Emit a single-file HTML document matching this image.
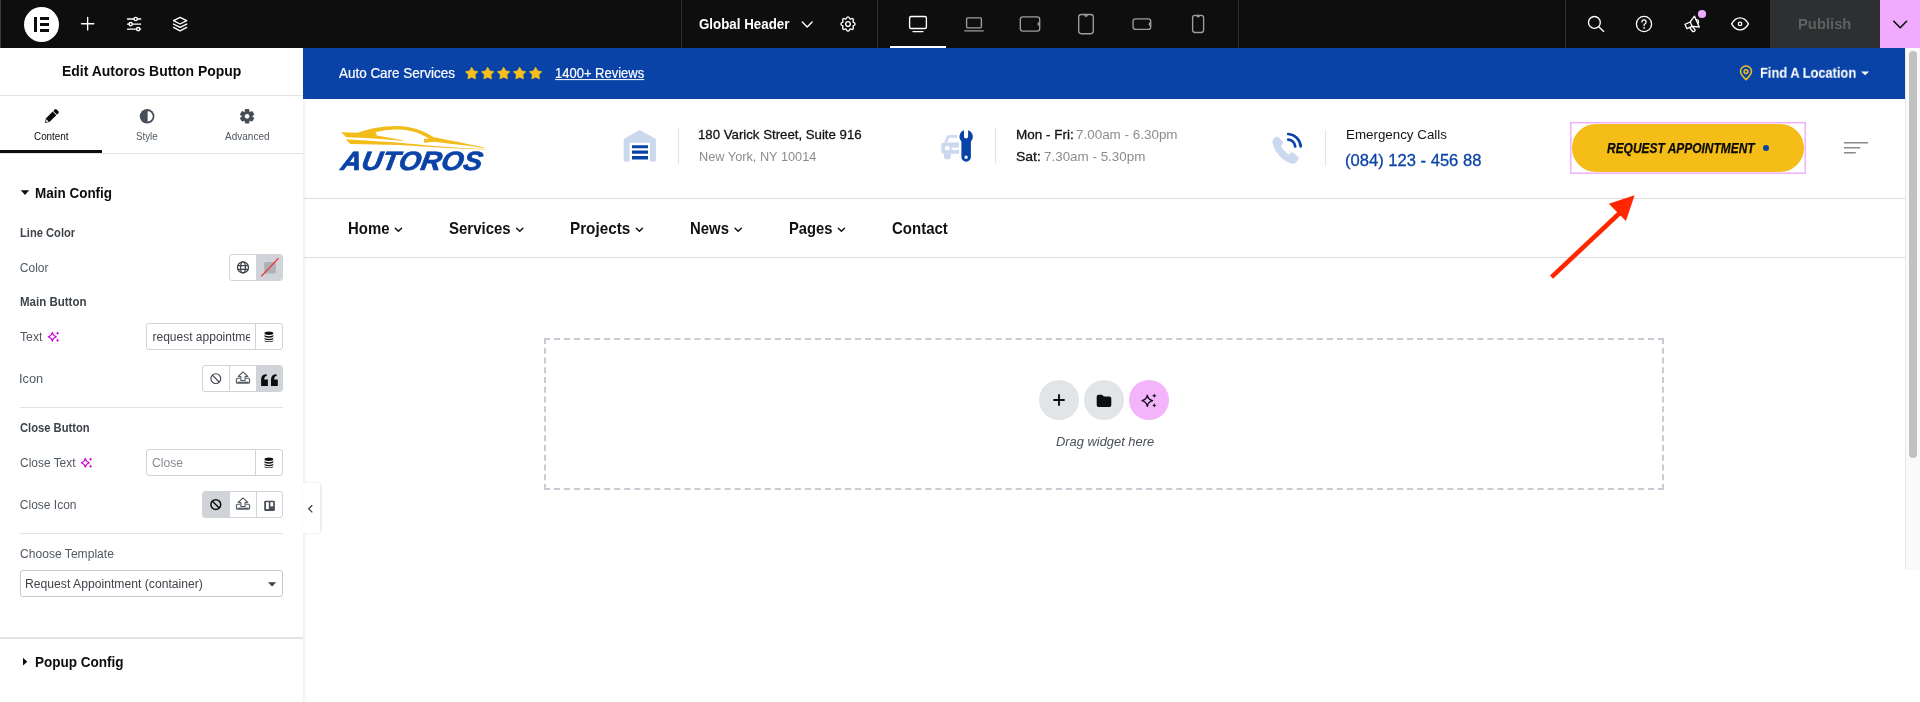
<!DOCTYPE html>
<html lang="en">
<head>
<meta charset="utf-8">
<title>Elementor | Global Header</title>
<style>
*{box-sizing:border-box;margin:0;padding:0}
html,body{width:1920px;height:702px;overflow:hidden;background:#fff;font-family:"Liberation Sans",sans-serif;color:#0c0d0e}
.abs{position:absolute}
svg.abs{overflow:visible;pointer-events:none}
.t{position:absolute;white-space:nowrap;line-height:1;transform-origin:0 50%}
.vsep{position:absolute;top:0;width:1px;height:48px;background:#2f3031}
.hr{position:absolute;left:20px;width:263px;height:1px;background:#e0e3e6}
.box{position:absolute;border:1px solid #d0d4d9;border-radius:3px;background:#fff}
.cell{position:absolute;top:0;height:100%}
</style>
</head>
<body>
<div id="app" style="position:absolute;left:0;top:0;width:1920px;height:702px;will-change:transform">
<!-- ===== TOP BAR ===== -->
<div class="abs" id="topbar" style="left:0;top:0;width:1920px;height:48px;background:#0e0e0f">
  <div class="abs" style="left:0;top:0;width:1px;height:48px;background:#3c3d3e"></div>
  <div class="abs" style="left:24px;top:6.500px;width:35px;height:35px;border-radius:50%;background:#fff"></div>
  <div class="abs" style="left:33.800px;top:17.100px;width:2.900px;height:14.600px;background:#0c0d0e"></div>
  <div class="abs" style="left:39.800px;top:17.100px;width:9.100px;height:2.800px;background:#0c0d0e"></div>
  <div class="abs" style="left:39.800px;top:23.100px;width:9.100px;height:2.800px;background:#0c0d0e"></div>
  <div class="abs" style="left:39.800px;top:28.900px;width:9.100px;height:2.800px;background:#0c0d0e"></div>
  <div class="vsep" style="left:681px"></div>
  <div class="vsep" style="left:877px"></div>
  <div class="vsep" style="left:1238px"></div>
  <div class="vsep" style="left:1565px"></div>
  <div class="abs" style="left:890px;top:46px;width:56px;height:2px;background:#fff"></div>
  <div class="abs" style="left:1770px;top:0;width:110px;height:48px;background:#2e2f30"></div>
  <div class="abs" style="left:1880px;top:0;width:40px;height:48px;background:#f0abfc"></div>
  <span class="t" style="left:699.26px;top:16px;font-size:15px;color:#fff;transform:translateY(0.20px) scaleX(0.8891);font-weight:bold;">Global Header</span><span class="t" style="left:1797.51px;top:16px;font-size:15px;color:#5f6061;transform:translateY(0.00px) scaleX(0.9856);font-weight:bold;">Publish</span>
  <svg class="abs" style="left:0;top:0" width="1920" height="48" viewBox="0 0 1920 48" fill="none" stroke="#fff" stroke-width="1.35" stroke-linecap="round" stroke-linejoin="round">
  <!-- plus -->
  <path d="M81.500 23.700h12.300M87.650 17.500v12.400"/>
  <!-- sliders -->
  <path d="M127.500 19h6.500M137.400 19h3.300M127.500 24.100h1.400M132.400 24.100h8.300M127.500 29.100h8.900M139.900 29.100h.8"/>
  <circle cx="135.650" cy="19" r="1.650"/><circle cx="130.650" cy="24.100" r="1.650"/><circle cx="138.150" cy="29.100" r="1.650"/>
  <!-- layers -->
  <path d="M180.100 17.300l6.600 3.350-6.600 3.350-6.600-3.350z"/><path d="M173.500 24.050l6.600 3.350 6.600-3.350"/><path d="M173.500 27.450l6.600 3.350 6.600-3.350"/>
  <!-- chevron -->
  <path d="M802.3 22l4.9 4.9 4.9-4.9" stroke-width="1.4"/>
  <!-- gear -->
  <g transform="translate(848 24) scale(.79)">
   <path stroke-width="1.7" d="M-1.68-7.68c.43-1.76 2.93-1.76 3.36 0a1.72 1.72 0 0 0 2.57 1.07c1.54-.94 3.31.83 2.37 2.37a1.72 1.72 0 0 0 1.07 2.57c1.75.43 1.75 2.93 0 3.35a1.72 1.72 0 0 0-1.07 2.57c.94 1.54-.83 3.31-2.37 2.37a1.72 1.72 0 0 0-2.57 1.07c-.43 1.75-2.93 1.75-3.35 0a1.72 1.72 0 0 0-2.57-1.07c-1.54.94-3.31-.83-2.37-2.37a1.72 1.72 0 0 0-1.07-2.57c-1.75-.43-1.75-2.93 0-3.35a1.72 1.72 0 0 0 1.07-2.57c-.94-1.54.83-3.31 2.37-2.37 1 .61 2.3.07 2.57-1.07z"/>
   <circle r="3" stroke-width="1.7"/>
  </g>
  <!-- desktop -->
  <rect x="909.6" y="16.5" width="16.8" height="12" rx="1.5"/><path d="M913 31.6h10"/>
  <g stroke="#9e9e9e">
  <!-- laptop -->
  <rect x="966.6" y="17.8" width="14.8" height="10" rx="1"/><path d="M964.8 30.8h18.4"/>
  <!-- tablet landscape -->
  <rect x="1020.3" y="16.8" width="19.4" height="14.4" rx="2.6"/><path d="M1039.4 22.6a1.4 1.4 0 0 0 0 2.8"/>
  <!-- tablet portrait -->
  <rect x="1078.7" y="14.5" width="14.6" height="19.2" rx="2.6"/><path d="M1084.6 14.8a1.4 1.4 0 0 0 2.8 0"/>
  <!-- mobile landscape -->
  <rect x="1133.1" y="18.9" width="17.6" height="10.4" rx="2.4"/><path d="M1150.5 22.8a1.3 1.3 0 0 0 0 2.6"/>
  <!-- mobile portrait -->
  <rect x="1192.6" y="15.3" width="11" height="17.2" rx="2.4"/><path d="M1196.8 15.6a1.3 1.3 0 0 0 2.6 0"/>
  </g>
  <!-- search -->
  <circle cx="1594.400" cy="22.400" r="5.900"/><path d="M1598.700 26.700l5 4.700"/>
  <!-- help -->
  <circle cx="1644" cy="24" r="7.6"/><path d="M1641.9 21.9a2.1 2.1 0 1 1 3.2 1.8c-.7.45-1.1.9-1.1 1.8" stroke-width="1.3"/><circle cx="1644" cy="27.9" r=".5" fill="#fff" stroke-width=".6"/>
  <!-- megaphone -->
  <g transform="translate(1693.8 23) rotate(-24)" stroke-width="1.3">
   <path d="M-8.600-2.400h5.700l6.300-3.500v11.800l-6.300-3.500h-5.700z"/><path d="M-2.900-2.300v4.600"/>
   <path d="M-5.700 2.300l1.100 4.700a.9.9 0 0 0 .9.700h1.100a.9.900 0 0 0 .9-1.100l-.900-3.900"/>
   <path d="M3.400-2.200a2.300 2.300 0 0 1 0 4.400"/>
  </g>
  <circle cx="1702" cy="14" r="4.1" fill="#f0abfc" stroke="none"/>
  <!-- eye -->
  <path d="M1731.600 23.900c2.300-4 5.100-6 8.450-6s6.150 2 8.450 6c-2.300 4-5.100 6-8.450 6s-6.150-2-8.450-6z"/><circle cx="1740.050" cy="23.900" r="1.700"/>
  <!-- publish chevron -->
  <path d="M1893.8 21.3l6.4 6.4 6.4-6.4" stroke="#0c0d0e" stroke-width="1.6"/>
</svg>
</div>

<!-- ===== EDITOR PANEL ===== -->
<div class="abs" id="panel" style="left:0;top:48px;width:303px;height:654px;background:#fff"></div>
<div class="abs" style="left:0;top:95px;width:303px;height:1px;background:#e3e6e9"></div>
<div class="abs" style="left:0;top:150px;width:102px;height:3px;background:#0c0d0e"></div>
<div class="abs" style="left:0;top:153px;width:303px;height:1px;background:#e3e6e9"></div>
<span class="t" style="left:61.77px;top:63px;font-size:15px;color:#0c0d0e;transform:translateY(-0.20px) scaleX(0.9304);font-weight:bold;">Edit Autoros Button Popup</span><span class="t" style="left:33.75px;top:131px;font-size:11px;color:#0c0d0e;transform:translateY(-0.50px) scaleX(0.8974);">Content</span><span class="t" style="left:136.26px;top:131px;font-size:11px;color:#515962;transform:translateY(-0.50px) scaleX(0.8851);">Style</span><span class="t" style="left:225.30px;top:131px;font-size:11px;color:#515962;transform:translateY(-0.50px) scaleX(0.9098);">Advanced</span>
<span class="t" style="left:34.54px;top:186px;font-size:14px;color:#0c0d0e;transform:translateY(0.30px) scaleX(0.9623);font-weight:bold;">Main Config</span><span class="t" style="left:19.60px;top:227px;font-size:12px;color:#3f444b;transform:translateY(0.00px) scaleX(0.9299);font-weight:bold;">Line Color</span><span class="t" style="left:19.80px;top:262px;font-size:12px;color:#515962;transform:translateY(-0.30px) scaleX(1.0000);">Color</span>
<!-- colour control -->
<div class="box" style="left:229px;top:254px;width:54px;height:27px;overflow:hidden"><div class="cell" style="left:26px;width:28px;background:#d0d4d9"></div></div>
<span class="t" style="left:19.58px;top:296px;font-size:12px;color:#3f444b;transform:translateY(0.20px) scaleX(0.9594);font-weight:bold;">Main Button</span><span class="t" style="left:20.04px;top:331px;font-size:12px;color:#515962;transform:translateY(-0.20px) scaleX(1.0207);">Text</span>
<!-- text input -->
<div class="box" style="left:146px;top:323px;width:137px;height:27px"><div class="cell" style="left:108px;width:1px;background:#d0d4d9"></div></div>
<div class="abs" style="left:150px;top:326px;width:99.900px;height:21px;overflow:hidden"><span class="t" style="left:2.500px;top:4.500px;font-size:12px;color:#3f444b">request appointment</span></div>
<span class="t" style="left:19.33px;top:373px;font-size:12px;color:#515962;transform:translateY(0.00px) scaleX(1.0667);">Icon</span>
<div class="box" style="left:202px;top:365px;width:81px;height:27px;overflow:hidden"><div class="cell" style="left:26px;width:1px;background:#d0d4d9"></div><div class="cell" style="left:53px;width:28px;background:#d0d4d9"></div></div>
<div class="hr" style="top:407px"></div>
<span class="t" style="left:19.83px;top:422px;font-size:12px;color:#3f444b;transform:translateY(0.00px) scaleX(0.9320);font-weight:bold;">Close Button</span><span class="t" style="left:19.80px;top:457px;font-size:12px;color:#515962;transform:translateY(0.00px) scaleX(0.9955);">Close Text</span>
<div class="box" style="left:146px;top:449px;width:137px;height:27px"><div class="cell" style="left:108px;width:1px;background:#d0d4d9"></div></div>
<span class="t" style="left:152.00px;top:457px;font-size:12px;color:#878d95;transform:translateY(0.00px) scaleX(1.0084);">Close</span><span class="t" style="left:19.80px;top:499px;font-size:12px;color:#515962;transform:translateY(0.20px) scaleX(1.0000);">Close Icon</span>
<div class="box" style="left:202px;top:491px;width:81px;height:27px;overflow:hidden"><div class="cell" style="left:0;width:27px;background:#d0d4d9"></div><div class="cell" style="left:53px;width:1px;background:#d0d4d9"></div></div>
<div class="hr" style="top:533px"></div>
<span class="t" style="left:19.80px;top:548px;font-size:12px;color:#515962;transform:translateY(0.00px) scaleX(1.0081);">Choose Template</span>
<div class="box" style="left:20px;top:570px;width:263px;height:27px;border-color:#c5cad0"></div>
<span class="t" style="left:25.29px;top:578px;font-size:12px;color:#3f444b;transform:translateY(0.30px) scaleX(1.0141);">Request Appointment (container)</span>
<div class="abs" style="left:0;top:637px;width:303px;height:2px;background:#e0e4e8"></div>
<span class="t" style="left:34.53px;top:655px;font-size:14px;color:#0c0d0e;transform:translateY(0.20px) scaleX(0.9660);font-weight:bold;">Popup Config</span>

<!-- ===== PREVIEW ===== -->
<div class="abs" style="left:303px;top:48px;width:4px;height:654px;background:linear-gradient(90deg,#eff0f1,#fff)"></div>
<div class="abs" style="left:303px;top:48px;width:1602px;height:50.500px;background:#0a43a8"></div>
<div class="abs" style="left:303px;top:198px;width:1602px;height:1px;background:#dddddd"></div>
<div class="abs" style="left:303px;top:257px;width:1602px;height:1px;background:#dddddd"></div>
<!-- info dividers -->
<div class="abs" style="left:678px;top:128px;width:1px;height:36px;background:#e2e2e2"></div>
<div class="abs" style="left:995px;top:128px;width:1px;height:36px;background:#e2e2e2"></div>
<div class="abs" style="left:1325px;top:130px;width:1px;height:36px;background:#e2e2e2"></div>
<!-- button -->
<svg class="abs" style="left:1568px;top:120px" width="240" height="56" viewBox="1568 120 240 56"><rect x="1570.800" y="122.700" width="234.400" height="50.500" fill="none" stroke="#f0abfc" stroke-width="1.400"/></svg>
<div class="abs" style="left:1572px;top:123.600px;width:232.400px;height:48.400px;border-radius:25px;background:#f4bd17"></div>
<div class="abs" style="left:1763px;top:144.900px;width:6px;height:6px;border-radius:50%;background:#0a43a8"></div>
<!-- drop area -->
<div class="abs" style="left:544px;top:338px;width:1120px;height:152px;border:2px dashed #c9ccd3"></div>
<div class="abs" style="left:1039px;top:380px;width:40px;height:40px;border-radius:50%;background:#e2e5e7"></div>
<div class="abs" style="left:1084px;top:380px;width:40px;height:40px;border-radius:50%;background:#e2e5e7"></div>
<div class="abs" style="left:1129px;top:380px;width:40px;height:40px;border-radius:50%;background:#f3b4fc"></div>
<span class="t" style="left:339.40px;top:66px;font-size:14px;color:#fff;transform:translateY(0.10px) scaleX(0.9608);-webkit-text-stroke:0.2px #fff;">Auto Care Services</span><span class="t" style="left:555.07px;top:66px;font-size:14px;color:#fff;transform:translateY(0.10px) scaleX(0.9280);text-decoration:underline;text-underline-offset:1px;-webkit-text-stroke:0.2px #fff;">1400+ Reviews</span><span class="t" style="left:1760.08px;top:66px;font-size:14px;color:#fff;transform:translateY(-0.20px) scaleX(0.9184);font-weight:bold;">Find A Location</span>
<span class="t" style="left:339.83px;top:148px;font-size:26.5px;color:#0a43a8;transform:translateY(0.15px) scaleX(1.0692) skewX(-9deg);font-weight:bold;font-style:italic;-webkit-text-stroke:0.7px #0a43a8;transform-origin:0 85%;">AUTOROS</span>
<span class="t" style="left:698.22px;top:128px;font-size:13.5px;color:#141414;transform:translateY(0.45px) scaleX(0.9792);-webkit-text-stroke:0.3px #141414;">180 Varick Street, Suite 916</span><span class="t" style="left:698.56px;top:150px;font-size:13.5px;color:#8c8c8c;transform:translateY(-0.45px) scaleX(0.9439);">New York, NY 10014</span><span class="t" style="left:1016.00px;top:128px;font-size:13.5px;color:#141414;transform:translateY(0.45px) scaleX(1.0000);-webkit-text-stroke:0.3px #141414;">Mon - Fri:</span><span class="t" style="left:1076.35px;top:128px;font-size:13.5px;color:#8c8c8c;transform:translateY(0.45px) scaleX(0.9950);">7.00am - 6.30pm</span><span class="t" style="left:1016.22px;top:150px;font-size:13.5px;color:#141414;transform:translateY(-0.45px) scaleX(1.0364);-webkit-text-stroke:0.3px #141414;">Sat:</span><span class="t" style="left:1043.96px;top:150px;font-size:13.5px;color:#8c8c8c;transform:translateY(-0.45px) scaleX(0.9930);">7.30am - 5.30pm</span><span class="t" style="left:1345.61px;top:128px;font-size:13.5px;color:#141414;transform:translateY(0.45px) scaleX(0.9891);">Emergency Calls</span><span class="t" style="left:1345.02px;top:152px;font-size:17px;color:#0a43a8;transform:translateY(-0.30px) scaleX(0.9750);-webkit-text-stroke:0.3px #0a43a8;">(084) 123 - 456 88</span><span class="t" style="left:1607.29px;top:141px;font-size:14.5px;color:#0b0b0b;transform:translateY(-0.25px) scaleX(0.8245);font-weight:bold;font-style:italic;-webkit-text-stroke:0.25px #0b0b0b;">REQUEST APPOINTMENT</span>
<span class="t" style="left:347.80px;top:220px;font-size:16.5px;color:#111;transform:translateY(-0.05px) scaleX(0.9040);font-weight:bold;">Home</span><span class="t" style="left:449.25px;top:220px;font-size:16.5px;color:#111;transform:translateY(-0.05px) scaleX(0.9079);font-weight:bold;">Services</span><span class="t" style="left:570.38px;top:220px;font-size:16.5px;color:#111;transform:translateY(-0.05px) scaleX(0.9244);font-weight:bold;">Projects</span><span class="t" style="left:689.90px;top:220px;font-size:16.5px;color:#111;transform:translateY(-0.05px) scaleX(0.9036);font-weight:bold;">News</span><span class="t" style="left:788.81px;top:220px;font-size:16.5px;color:#111;transform:translateY(-0.05px) scaleX(0.8936);font-weight:bold;">Pages</span><span class="t" style="left:892.32px;top:220px;font-size:16.5px;color:#111;transform:translateY(-0.05px) scaleX(0.9091);font-weight:bold;">Contact</span>
<span class="t" style="left:1055.60px;top:435px;font-size:13px;color:#495057;transform:translateY(-0.10px) scaleX(0.9908);font-style:italic;">Drag widget here</span>
<svg class="abs" style="left:0;top:0" width="1920" height="702" viewBox="0 0 1920 702" fill="none">
  <!-- stars -->
  <g fill="#f5c01c" stroke="#f5c01c" stroke-width=".9" stroke-linejoin="round"><polygon points="471.67,67.35 473.67,70.90 477.66,71.70 474.90,74.70 475.37,78.75 471.67,77.05 467.97,78.75 468.44,74.70 465.68,71.70 469.67,70.90"/><polygon points="487.65,67.35 489.65,70.90 493.64,71.70 490.88,74.70 491.35,78.75 487.65,77.05 483.95,78.75 484.42,74.70 481.66,71.70 485.65,70.90"/><polygon points="503.63,67.35 505.63,70.90 509.62,71.70 506.86,74.70 507.33,78.75 503.63,77.05 499.93,78.75 500.40,74.70 497.64,71.70 501.63,70.90"/><polygon points="519.61,67.35 521.61,70.90 525.60,71.70 522.84,74.70 523.31,78.75 519.61,77.05 515.91,78.75 516.38,74.70 513.62,71.70 517.61,70.90"/><polygon points="535.59,67.35 537.59,70.90 541.58,71.70 538.82,74.70 539.29,78.75 535.59,77.05 531.89,78.75 532.36,74.70 529.60,71.70 533.59,70.90"/></g>
  <!-- pin -->
  <path d="M1746 79.600c-3.400-3.300-5.500-5.800-5.500-8.200a5.500 5.500 0 0 1 11 0c0 2.400-2.100 4.900-5.500 8.200z" stroke="#f5c01c" stroke-width="1.500" stroke-linejoin="round"/>
  <circle cx="1746" cy="71.600" r="1.900" stroke="#f5c01c" stroke-width="1.400"/>
  <path d="M1861 71.400h8.200l-4.100 3.900z" fill="#fff"/>
  <!-- logo car -->
  <g transform="translate(330 115) scale(.09398)" fill="#f2bc1a">
    <path d="M120 183L292 190C400 150 560 115 720 117C870 118 1000 168 1105 238C1300 276 1500 316 1643 346L1631 350C1520 335 1300 307 1105 285L1000 296L1000 252L1055 252C960 190 850 152 720 153C620 154 540 166 485 181L500 218C600 236 700 256 778 270L770 276C600 256 400 242 172 236Z"/>
    <path d="M170 258L745 296L1077 327L1410 351L1648 363L1648 368L1354 357.500L1077 340.500L745 318L215 308Z"/>
  </g>
  <!-- warehouse -->
  <path d="M639.800 130l16.100 8.900v22.700h-5.900v-18.800h-20.400v18.800h-5.900v-22.700z" fill="#ccd8ee"/>
  <path d="M632 145.200h16v3.100h-16zM632 150.600h16v3.100h-16zM632 156.100h16v3.400h-16z" fill="#0a43a8"/>
  <!-- car + wrench -->
  <g fill="#ccd8ee">
    <path d="M957 135v2.700h-6.600c-1 0-1.700.5-2 1.400l-1.200 3.400h-2.900l1.500-4.300c.7-2 2.300-3.200 4.400-3.200z"/>
    <path d="M944.500 142.500h14.500v5.100h-6.200a.900.900 0 0 0 0 2.400h6.200v3.800h-15.200a2.500 2.500 0 0 1-2.500-2.500v-5.600a3.200 3.200 0 0 1 3.200-3.200zM947.200 145.800a2.400 2.400 0 1 0 0 4.800a2.400 2.400 0 0 0 0-4.800z" fill-rule="evenodd"/>
    <path d="M944 153.500h6.800v3.600a2.200 2.200 0 0 1-2.200 2.200h-2.400a2.200 2.200 0 0 1-2.200-2.200z"/>
  </g>
  <path fill-rule="evenodd" fill="#0a43a8" d="M964 130.200v6.200a2.050 2.050 0 0 0 4.100 0v-6.200a6.900 6.900 0 0 1 2.800 11.300v15.400a4.750 4.750 0 0 1-9.500 0v-15.400a6.900 6.900 0 0 1 2.600-11.300zM966.100 155.500a1.700 1.700 0 1 0 0 3.400a1.700 1.700 0 0 0 0-3.400z"/>
  <!-- phone -->
  <path fill="#ccd8ee" d="M1275.300 137.200a2 2 0 0 1 2.900-.100l4.300 4.100a2 2 0 0 1 .100 2.800l-1.700 1.900c2 3.600 4.400 6.300 7.800 8.600l2.300-1.800a2 2 0 0 1 2.700.1l4.400 4.200a2 2 0 0 1 .100 2.800l-2.400 2.600c-1.300 1.400-3.100 1.600-5.200.9c-8.400-2.800-15.600-10.700-17.900-19.500c-.5-1.900-.200-3.500 1-4.700z"/>
  <g stroke="#0a43a8" stroke-width="2.700" stroke-linecap="round">
    <path d="M1288.200 134a13.300 13.300 0 0 1 12.500 12.400"/>
    <path d="M1288.200 139.600a7.700 7.700 0 0 1 7.000 6.900"/>
  </g>
  <!-- hamburger -->
  <path d="M1844 142.800h24M1844 147.800h16.200M1844 152.800h11.800" stroke="#8a8a8a" stroke-width="1.500"/>
  <!-- nav chevrons -->
  <g stroke="#111" stroke-width="1.500" stroke-linecap="round" stroke-linejoin="round">
    <path d="M395.300 228.300l3.100 3 3.100-3"/><path d="M516.700 228.300l3.100 3 3.100-3"/><path d="M636.300 228.300l3.100 3 3.100-3"/>
    <path d="M735.100 228.300l3.100 3 3.100-3"/><path d="M838.300 228.300l3.100 3 3.100-3"/>
  </g>
  <!-- red arrow -->
  <path d="M1551.500 277.100L1620 212.800" stroke="#ff2600" stroke-width="4.600"/>
  <path d="M1634.600 195.200L1608.800 203.800L1625.900 221z" fill="#ff2600"/>
  <!-- add buttons -->
  <path d="M1053.300 400h11.400M1059 394.300v11.400" stroke="#0c0d0e" stroke-width="1.900"/>
  <path d="M1096.700 396.600a1.800 1.800 0 0 1 1.800-1.800h3.600l1.800 1.800h5.600a1.800 1.800 0 0 1 1.800 1.800v6.800a1.800 1.800 0 0 1-1.800 1.800h-11a1.800 1.800 0 0 1-1.800-1.800z" fill="#0c0d0e"/>
  <g fill="#0c0d0e">
    <path d="M1147.300 395.100c.6 3.400 1.700 4.600 5.300 5.600-3.600 1-4.700 2.200-5.300 5.600-.6-3.400-1.700-4.600-5.300-5.600 3.600-1 4.700-2.200 5.300-5.600z" fill="none" stroke="#0c0d0e" stroke-width="1.300" stroke-linejoin="round"/>
    <path d="M1154.300 393.600l.7 1.400 1.400.7-1.400.7-.7 1.400-.7-1.400-1.400-.7 1.400-.7z"/>
    <path d="M1154.300 403.300l.7 1.400 1.400.7-1.400.7-.7 1.400-.7-1.400-1.400-.7 1.400-.7z"/>
  </g>
</svg>
<!-- panel toggle -->
<div class="abs" style="left:303px;top:483px;width:17px;height:50px;background:#fff;border-radius:0 3px 3px 0;box-shadow:1px 0 3px rgba(0,0,0,.12)"></div>
<svg class="abs" style="left:0;top:0" width="320" height="702" viewBox="0 0 320 702" fill="none">
  <!-- pencil -->
  <g transform="translate(51.15 116.75) rotate(45)" fill="#0c0d0e">
    <path d="M-2.600-7.900a1 1 0 0 1 1-1h3.200a1 1 0 0 1 1 1v2.300h-5.200z"/>
    <path d="M-2.600-4.700h5.200v9.300l-2.600 4.300-2.600-4.300z"/>
    <path d="M-1.500 5.100h3l-1.500 2.300z" fill="#fff"/>
  </g>
  <!-- style half circle -->
  <circle cx="147.100" cy="116.300" r="7.300" fill="#474e57"/>
  <path d="M147.600 111.200a5.100 5.100 0 0 1 0 10.200z" fill="#fff"/>
  <!-- gear (advanced) -->
  <g transform="translate(247.1 116.300)" fill="#474e57">
    <g id="tooth"><rect x="-2.300" y="-7.200" width="4.600" height="14.400" rx=".9"/></g>
    <use href="#tooth" transform="rotate(60)"/><use href="#tooth" transform="rotate(120)"/>
    <circle r="5.300"/><circle r="2.350" fill="#fff"/>
  </g>
  <!-- section arrows -->
  <path d="M20.800 190.300h8.400l-4.200 4.800z" fill="#0c0d0e"/>
  <path d="M23 657.800l4.300 3.900-4.300 3.900z" fill="#0c0d0e"/>
  <!-- globe -->
  <g stroke="#3f444b" stroke-width="1.250">
    <circle cx="243" cy="267.400" r="5.500"/><ellipse cx="243" cy="267.400" rx="2.400" ry="5.500"/><path d="M237.800 265.500h10.400M237.800 269.300h10.400"/>
  </g>
  <!-- colour swatch -->
  <rect x="264.100" y="262.100" width="11.700" height="11.500" rx="1.500" fill="#aeb2b7"/>
  <path d="M261.300 276.400l17.200-18.300" stroke="#ee2b36" stroke-width="1.300"/>
  <!-- sparkles -->
  <g id="spark" fill="#d004d4">
    <path d="M52.300 332.300c.5 2.700 1.300 3.600 4.100 4.400-2.800.8-3.600 1.700-4.100 4.400-.5-2.700-1.300-3.600-4.100-4.400 2.800-.8 3.600-1.700 4.100-4.400z" fill="none" stroke="#d004d4" stroke-width="1.100" stroke-linejoin="round"/>
    <path d="M57.600 331.500l.6 1.100 1.100.6-1.100.6-.6 1.100-.6-1.100-1.100-.6 1.100-.6z"/>
    <path d="M57.600 338.600l.6 1.100 1.100.6-1.100.6-.6 1.100-.6-1.100-1.100-.6 1.100-.6z"/>
  </g>
  <use href="#spark" transform="translate(33 126)"/>
  <!-- db icons -->
  <g id="db" fill="#0c0d0e">
    <ellipse cx="268.900" cy="333.300" rx="4.400" ry="1.700"/>
    <path d="M264.500 334.600c0 1 2 1.700 4.400 1.700s4.400-.7 4.400-1.700v1.400c0 1-2 1.700-4.400 1.700s-4.400-.7-4.400-1.700z"/>
    <path d="M264.500 337.200c0 1 2 1.700 4.400 1.700s4.400-.7 4.400-1.700v1.400c0 1-2 1.700-4.400 1.700s-4.400-.7-4.400-1.700z"/>
    <path d="M264.500 339.800c0 1 2 1.700 4.400 1.700s4.400-.7 4.400-1.700v.6c0 1-2 1.700-4.400 1.700s-4.400-.7-4.400-1.700z"/>
  </g>
  <use href="#db" transform="translate(0 126)"/>
  <!-- icon chooser 1 -->
  <g stroke="#3f444b" stroke-width="1.150">
    <circle cx="215.800" cy="378.600" r="4.900"/><path d="M212.400 375.200l6.800 6.800"/>
  </g>
  <g id="upl" stroke="#515962" stroke-width="1.100" stroke-linejoin="round">
    <path d="M243 371.900l4.800 4.600h-2.700v4h-4.200v-4h-2.700z"/>
    <path d="M240.300 378.300h-2.600a1.300 1.300 0 0 0-1.300 1.300v2.400a1.300 1.300 0 0 0 1.300 1.300h10.600a1.300 1.300 0 0 0 1.300-1.300v-2.400a1.300 1.300 0 0 0-1.300-1.300h-2.600" />
    <path d="M237.400 382.300h11.200" stroke-width="1.300"/>
  </g>
  <g id="q" fill="#0c0d0e">
    <path d="M261.100 385.900v-6.700c0-3.200 2-4.900 5.400-5l.4 1.800c-1.900.3-2.600 1.300-2.600 3.200v.2h3.600v6.500z"/>
  </g>
  <use href="#q" transform="translate(9.900 0)"/>
  <!-- icon chooser 2 -->
  <g stroke="#0c0d0e" stroke-width="1.500">
    <circle cx="215.800" cy="504.600" r="4.900"/><path d="M212.400 501.200l6.800 6.800"/>
  </g>
  <use href="#upl" transform="translate(0 126)"/>
  <rect x="264.200" y="500.800" width="10.700" height="10.300" rx="1.400" fill="#474e57"/>
  <rect x="266" y="502.200" width="2.800" height="6.900" fill="#fff"/><rect x="270.400" y="502.200" width="2.800" height="4.200" fill="#fff"/>
  <!-- select caret -->
  <path d="M268 582.200h8.200l-4.100 4.200z" fill="#3f444b"/>
  <!-- toggle chevron -->
  <path d="M312.300 505.200l-3.600 3.600 3.600 3.600" stroke="#3f444b" stroke-width="1.300"/>
</svg>
<!-- preview scrollbar -->
<div class="abs" style="left:1905px;top:48px;width:15px;height:522px;background:#fafafa;border-left:1px solid #e8e8e8"></div>
<div class="abs" style="left:1909.300px;top:51px;width:8.200px;height:407px;border-radius:4px;background:#c1c1c1"></div>
</div>
</body>
</html>
